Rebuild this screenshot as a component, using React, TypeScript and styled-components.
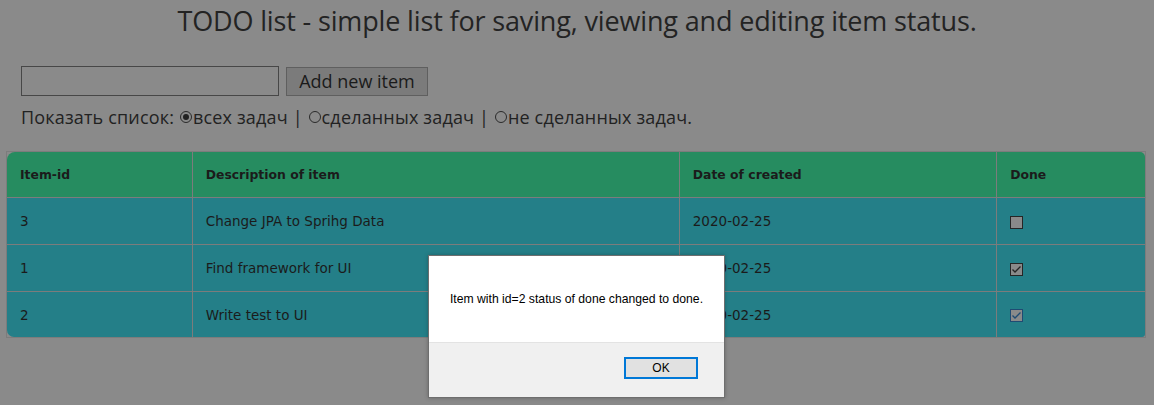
import React from "react";
import styled, { createGlobalStyle } from "styled-components";

const Global = createGlobalStyle`
  html, body { margin: 0; padding: 0; background: #8a8a8a; }
  body { font-family: "Open Sans", "Noto Sans", sans-serif; color: #1e1e1e; }
`;

const Page = styled.div`
  position: relative;
  width: 1154px;
  height: 405px;
  overflow: hidden;
  background: #8a8a8a;
`;

const Title = styled.h1`
  margin: 0;
  padding-top: 2px;
  text-align: center;
  font-weight: 400;
  font-size: 27px;
  letter-spacing: -0.15px;
  line-height: 38px;
  color: #232323;
`;

const Controls = styled.div`
  padding: 26px 0 0 21px;
  display: flex;
  flex-direction: column;
  gap: 9px;
`;

const AddRow = styled.div`
  display: flex;
  align-items: center;
  gap: 7px;
`;

const TextInput = styled.input`
  box-sizing: border-box;
  width: 258px;
  height: 30px;
  border: 1px solid #474747;
  background: #8a8a8a;
  margin: 0;
`;

const AddButton = styled.button`
  box-sizing: border-box;
  width: 142px;
  height: 29px;
  padding: 0;
  margin: 0;
  border: 1px solid #5f5f5f;
  background: #7b7b7b;
  font-family: "Open Sans", "Noto Sans", sans-serif;
  font-size: 18px;
  color: #1a1a1a;
`;

const FilterLine = styled.div`
  display: flex;
  align-items: center;
  font-size: 18px;
  line-height: 24px;
  letter-spacing: 0.17px;
  color: #222;
  white-space: pre;
`;

const Radio = styled.span<{ $checked?: boolean }>`
  box-sizing: border-box;
  display: inline-block;
  width: 12px;
  height: 12px;
  border-radius: 50%;
  border: 1px solid #2a2a2a;
  margin: 0 1px;
  position: relative;
  &::after {
    content: "";
    display: ${(p) => (p.$checked ? "block" : "none")};
    position: absolute;
    inset: 2px;
    border-radius: 50%;
    background: #222;
  }
`;

const TableWrap = styled.div`
  padding: 22px 8px 0 6px;
`;

const Table = styled.table`
  width: 1140px;
  border-spacing: 0;
  border: 1px solid #7c7c7c;
  font-family: "DejaVu Sans", Verdana, sans-serif;
  font-size: 13.5px;
  color: #1b1b1b;
`;

const Th = styled.th<{ $w: number; $radius?: string }>`
  box-sizing: border-box;
  width: ${(p) => p.$w}px;
  height: 46px;
  padding: 0 12px 0 13px;
  text-align: left;
  font-weight: 700;
  font-size: 12.4px;
  background: #268c60;
  border-right: 1px solid #7c7c7c;
  border-bottom: 1px solid #7c7c7c;
  border-radius: ${(p) => p.$radius || "0"};
  &:last-child { border-right: none; }
`;

const Td = styled.td<{ $radius?: string }>`
  box-sizing: border-box;
  height: 47px;
  padding: 0 12px 0 13px;
  background: #247f88;
  border-right: 1px solid #7c7c7c;
  border-bottom: 1px solid #7c7c7c;
  border-radius: ${(p) => p.$radius || "0"};
  &:last-child { border-right: none; }
  tr:last-child > & { border-bottom: none; height: 45px; }
`;

const Check = styled.span<{ $focus?: boolean }>`
  box-sizing: border-box;
  display: inline-flex;
  align-items: center;
  justify-content: center;
  width: 13px;
  height: 13px;
  margin: 0;
  border: 1px solid ${(p) => (p.$focus ? "#1f4b73" : "#262626")};
  background: #8a8a8a;
  vertical-align: middle;
`;

const Dialog = styled.div`
  position: absolute;
  left: 428px;
  top: 255px;
  width: 297px;
  height: 143px;
  box-sizing: border-box;
  border: 1px solid #6e6e6e;
  background: #f0f0f0;
  display: flex;
  flex-direction: column;
  box-shadow: 0 0 4px rgba(0, 0, 0, 0.25);
`;

const DialogBody = styled.div`
  height: 86px;
  background: #ffffff;
  border-bottom: 1px solid #e3e3e3;
  display: flex;
  align-items: center;
  justify-content: center;
  font-family: "Liberation Sans", Arial, sans-serif;
  font-size: 12.2px;
  color: #000;
`;

const DialogFooter = styled.div`
  flex: 1;
  display: flex;
  justify-content: flex-end;
  padding: 14px 26px 0 0;
`;

const OkButton = styled.button`
  box-sizing: border-box;
  width: 74px;
  height: 22px;
  margin: 0;
  border: 2px solid #0078d7;
  background: #e1e1e1;
  font-family: "Liberation Sans", Arial, sans-serif;
  font-size: 12px;
  color: #000;
  padding: 0;
`;

const CheckMark = ({ color }: { color: string }) => (
  <svg width="11" height="11" viewBox="0 0 11 11">
    <path d="M1.5 5.5 L4 8 L9.5 2.5" fill="none" stroke={color} strokeWidth="1.3" />
  </svg>
);

const rows = [
  { id: 3, desc: "Change JPA to Sprihg Data", date: "2020-02-25", done: false, focus: false },
  { id: 1, desc: "Find framework for UI", date: "2020-02-25", done: true, focus: false },
  { id: 2, desc: "Write test to UI", date: "2020-02-25", done: true, focus: true },
];

export default function App() {
  return (
    <Page>
      <Global />
      <Title>TODO list - simple list for saving, viewing and editing item status.</Title>
      <Controls>
        <AddRow>
          <TextInput />
          <AddButton>Add new item</AddButton>
        </AddRow>
        <FilterLine>
          Показать список: <Radio $checked />всех задач | <Radio />сделанных задач | <Radio />не сделанных задач.
        </FilterLine>
      </Controls>
      <TableWrap>
        <Table>
          <thead>
            <tr>
              <Th $w={186} $radius="8px 0 0 0">Item-id</Th>
              <Th $w={488}>Description of item</Th>
              <Th $w={318}>Date of created</Th>
              <Th $w={148} $radius="0 5px 0 0">Done</Th>
            </tr>
          </thead>
          <tbody>
            {rows.map((r, i) => {
              const last = i === rows.length - 1;
              return (
                <tr key={r.id}>
                  <Td $radius={last ? "0 0 0 7px" : undefined}>{r.id}</Td>
                  <Td>{r.desc}</Td>
                  <Td>{r.date}</Td>
                  <Td $radius={last ? "0 0 3px 0" : undefined}>
                    <Check $focus={r.focus}>
                      {r.done && <CheckMark color={r.focus ? "#1f4b73" : "#262626"} />}
                    </Check>
                  </Td>
                </tr>
              );
            })}
          </tbody>
        </Table>
      </TableWrap>
      <Dialog>
        <DialogBody>Item with id=2 status of done changed to done.</DialogBody>
        <DialogFooter>
          <OkButton>OK</OkButton>
        </DialogFooter>
      </Dialog>
    </Page>
  );
}
